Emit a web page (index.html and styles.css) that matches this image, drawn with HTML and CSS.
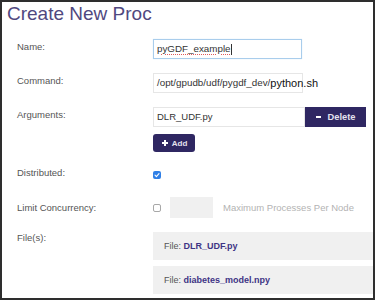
FILE: index.html
```html
<!DOCTYPE html>
<html>
<head>
<meta charset="utf-8">
<link rel="stylesheet" href="styles.css">
</head>
<body>
<div class="frame">
  <h1 class="title">Create New Proc</h1>
  <div class="form">
    <div class="row row-name">
      <div class="label">Name:</div>
      <div class="control">
        <div class="field field-focus"><span class="misspelled">pyGDF_example</span><span class="caret"></span></div>
      </div>
    </div>
    <div class="row row-command">
      <div class="label">Command:</div>
      <div class="control">
        <div class="field field-overflow">/opt/gpudb/udf/pygdf_dev/<span class="cmd-tail">python.sh</span></div>
      </div>
    </div>
    <div class="row row-args">
      <div class="label">Arguments:</div>
      <div class="control control-stack">
        <div class="arg-line">
          <div class="field field-arg">DLR_UDF.py</div>
          <button class="btn btn-delete"><span class="icon-minus"></span>Delete</button>
        </div>
        <button class="btn btn-add"><span class="icon-plus"></span>Add</button>
      </div>
    </div>
    <div class="row row-dist">
      <div class="label">Distributed:</div>
      <div class="control">
        <span class="check check-on">
          <svg viewBox="0 0 8 8" width="8" height="8"><path d="M2 4.2 L3.4 5.6 L6 2.6" fill="none" stroke="#fff" stroke-width="1.1" stroke-linecap="round" stroke-linejoin="round"/></svg>
        </span>
      </div>
    </div>
    <div class="row row-limit">
      <div class="label">Limit Concurrency:</div>
      <div class="control control-inline">
        <span class="check check-off"></span>
        <div class="num-box"></div>
        <span class="hint">Maximum Processes Per Node</span>
      </div>
    </div>
    <div class="row row-files">
      <div class="label">File(s):</div>
      <div class="control control-files">
        <div class="file-box">File: <span class="file-name">DLR_UDF.py</span></div>
        <div class="file-box">File: <span class="file-name">diabetes_model.npy</span></div>
      </div>
    </div>
  </div>
</div>
</body>
</html>
```

FILE: styles.css
```css
* { box-sizing: border-box; }

html, body {
  margin: 0;
  padding: 0;
  background: #fff;
}

body {
  font-family: "Liberation Sans", Arial, Helvetica, sans-serif;
  color: #444;
}

.frame {
  width: 375px;
  height: 300px;
  border: 2px solid #2e2e2e;
  overflow: hidden;
  background: #fff;
}

.title {
  margin: 0;
  padding: 0.5px 0 0 5px;
  font-size: 19px;
  line-height: 22px;
  font-weight: normal;
  color: #50487f;
}

.form {
  padding-left: 15px;
}

.row {
  display: flex;
  align-items: flex-start;
}

.label {
  width: 136px;
  flex: none;
  font-size: 9.5px;
  line-height: 12px;
  color: #555;
  padding-top: 1.5px;
}

.control {
  flex: 1;
  display: flex;
  align-items: flex-start;
}

.row-name { margin-top: 14.5px; }
.row-command { margin-top: 14px; }
.row-args { margin-top: 14px; }
.row-dist { margin-top: 14px; }
.row-limit { margin-top: 18.5px; }
.row-files { margin-top: 14px; }

.row-dist .label { padding-top: 0.5px; }
.row-limit .label { padding-top: 4.5px; }
.row-files .label { padding-top: 0; }

.field {
  width: 150px;
  height: 20px;
  border: 1px solid #e6e6e6;
  background: #fff;
  font-size: 9.8px;
  line-height: 18px;
  padding-left: 3px;
  color: #333;
  white-space: nowrap;
  display: flex;
  align-items: center;
}

.field-focus {
  width: 149px;
  border-color: #a9cdec;
  box-shadow: 0 0 1px #cfe3f5;
}

.misspelled {
  text-decoration: underline dotted #e05a5a;
  text-decoration-thickness: 1px;
  text-underline-offset: 2px;
}

.caret {
  display: inline-block;
  width: 1px;
  height: 11px;
  background: #333;
  margin-left: 0.5px;
}

.field-overflow {
  overflow: visible;
}

.cmd-tail {
  font-size: 11px;
  color: #111;
}

.control-stack {
  flex-direction: column;
}

.arg-line {
  display: flex;
}

.field-arg {
  width: 152px;
  font-size: 9.5px;
}

.btn {
  border: none;
  margin: 0;
  padding: 0;
  background: #2f2762;
  color: #e4e2ee;
  font-family: "Liberation Sans", Arial, sans-serif;
  font-weight: bold;
  display: flex;
  align-items: center;
  justify-content: center;
}

.btn-delete {
  width: 61px;
  height: 20px;
  font-size: 9.3px;
  gap: 7px;
}

.icon-minus {
  display: inline-block;
  width: 5px;
  height: 2px;
  background: #fff;
}

.btn-add {
  width: 42px;
  height: 18px;
  margin-top: 7px;
  border-radius: 3px;
  font-size: 8px;
  gap: 4px;
  padding-left: 1px;
}

.icon-plus {
  position: relative;
  display: inline-block;
  width: 6px;
  height: 6px;
}
.icon-plus::before,
.icon-plus::after {
  content: "";
  position: absolute;
  background: #fff;
}
.icon-plus::before { left: 0; top: 2px; width: 6px; height: 2px; }
.icon-plus::after { left: 2px; top: 0; width: 2px; height: 6px; }

.check {
  width: 8px;
  height: 8px;
  border-radius: 2px;
  display: inline-flex;
  flex: none;
}

.check-on {
  background: #2f7fe6;
  margin-top: 4.5px;
}

.check-off {
  border: 1px solid #a8a8a8;
  background: #fff;
}

.control-inline {
  align-items: center;
}

.num-box {
  width: 43px;
  height: 21px;
  background: #f0f0f0;
  margin-left: 9px;
}

.hint {
  margin-left: 10px;
  font-size: 9.5px;
  color: #b3b3b3;
}

.control-files {
  flex-direction: column;
  align-items: stretch;
  gap: 6px;
}

.file-box {
  height: 28px;
  background: #f0f0f0;
  padding-left: 11px;
  display: flex;
  align-items: center;
  font-size: 9px;
  color: #555;
  white-space: pre;
}

.file-name {
  color: #3e3485;
  font-weight: bold;
}
```
